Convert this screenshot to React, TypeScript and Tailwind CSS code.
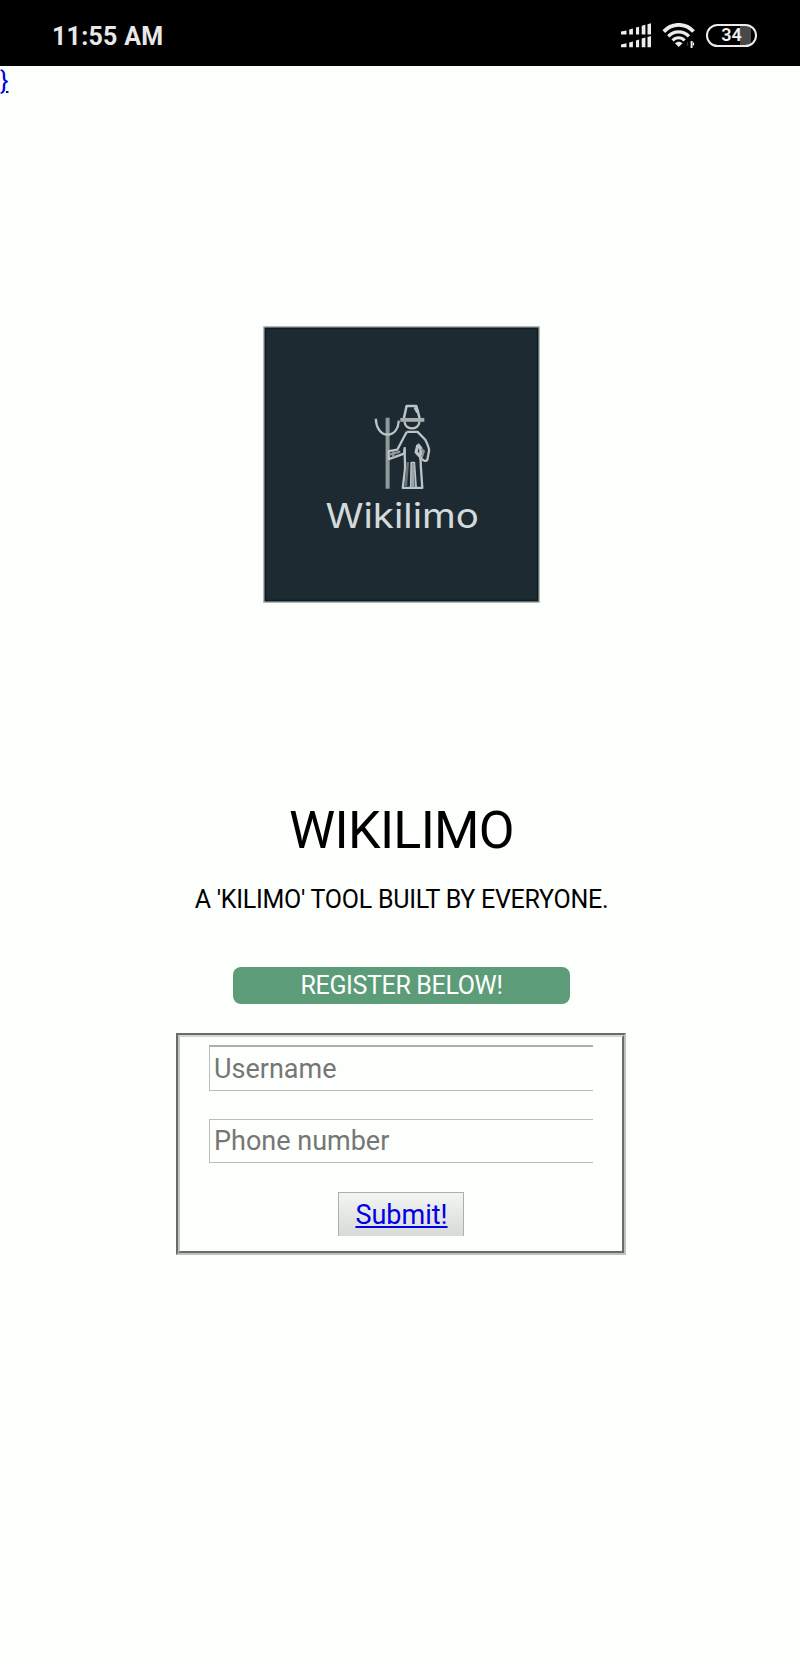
import React from "react";

function SignalIcon() {
  return (
    <svg width="32" height="26" viewBox="0 0 32 26" fill="#ececec">
      <path d="M1 8.600l5.500-1.200v4H1zM9.200 6.600l3.700-1v5.800H9.200zM16 4.600l3.100-.8v7.600H16zM21.700 2.800l3.700-1v9.600h-3.700zM27.500 1.200L31 .3v11.100h-3.500z" />
      <path d="M1 21.400l5.500-1.200v4H1zM9.200 19.400l3.700-1v5.800H9.200zM16 17.400l3.100-.8v7.600H16zM21.700 15.600l3.700-1v9.600h-3.700zM27.500 14l3.500-.9v11.100h-3.500z" />
    </svg>
  );
}

function WifiIcon() {
  return (
    <svg width="34" height="26" viewBox="0 0 34 26" fill="none" stroke="#ececec" strokeWidth="3.300">
      <path d="M1.800 8.600C10-.4 23.500-.4 31.500 8.600" strokeWidth="3.800" />
      <path d="M6.300 13.400C12 7.300 21.200 7.300 26.900 13.400" />
      <path d="M10.600 17.400c3.300-3.700 8.700-3.700 12 0" strokeWidth="3" />
      <path d="M13 20.300c2-2.200 5.600-2.200 7.500 0L16.700 24z" fill="#ececec" stroke="none" />
      <path d="M29.600 18v7" strokeWidth="2" />
      <path d="M31.500 19.500v3" strokeWidth="1.200" />
      <path d="M25.500 19v4" stroke="#333" strokeWidth="1.500" />
    </svg>
  );
}

function Logo() {
  return (
    <svg width="277" height="277" viewBox="263.500 325.500 277 277" className="block">
      <rect x="264.500" y="326.500" width="275" height="275" fill="#1d2a32" stroke="#9aa3a3" strokeWidth="1.500" />
      <rect x="266" y="328" width="272" height="272" fill="none" stroke="#0f1d25" strokeWidth="1.500" />
      <g transform="translate(0.8 -0.300)" fill="none" stroke="#bcc4c6" strokeWidth="2.300" strokeLinejoin="round">
        <path d="M387.300 417.500V488.500" stroke="#8f9a9c" strokeWidth="4" />
        <path d="M375.500 418.500C375.800 427 380 434.300 387.300 434.500C394.500 434.300 398 428 398.500 420.500" />
        <path d="M403.600 418L406.300 405.800H416L419.300 418" strokeWidth="2.500" />
        <path d="M414.800 407L417.500 412" strokeWidth="3.500" />
        <path d="M400 419.700H424" strokeWidth="3.800" stroke="#a7b0b1" />
        <path d="M404.200 421.500C405 430.500 418.300 430.500 419.200 421.500" />
        <path d="M406.500 431.700H417.300L425 439.500C427 443.500 428.800 447.500 428.800 450.500L427 459.500C425.500 461.500 423.500 460.800 421.700 458.700" />
        <path d="M406.500 431.700L403 438L397 449.500L388.500 451V459L403.800 453.500L404.500 447" />
        <path d="M404.300 449L404.800 468L402.500 487.700H422L420.500 466L420.200 456" />
        <path d="M389 454.500L400 451.500M393 451V457" stroke="#8f9a9c" />
        <path d="M417.300 444L420.500 448V459M417.500 445L415.800 452L419.500 456" strokeWidth="3.200" />
        <path d="M421 449L423.500 451L421.500 457" stroke="#89969a" />
        <path d="M410.500 487.500L411 462.500H414L415.800 487.500" strokeWidth="1.800" />
        <path d="M412.700 464V487" stroke="#98a3a6" strokeWidth="3" />
        <path d="M407.500 462L405.500 486" stroke="#66747a" strokeWidth="2.500" />
      </g>
      <text x="326" y="527" textLength="153.500" lengthAdjust="spacingAndGlyphs" fontSize="34" fill="#d3dadc" fontFamily="Inter, sans-serif">
        Wikilimo
      </text>
    </svg>
  );
}

export default function App() {
  return (
    <div className="flex h-[1664px] w-[800px] flex-col items-center overflow-hidden bg-[#fdfffd] font-['Roboto',sans-serif] text-black">
      <header className="flex h-[66px] w-full shrink-0 items-center bg-black pl-[52px] text-[#e8e8e8]">
        <span className="mt-[7px] w-[568px] text-[25px] font-bold leading-[30px] tracking-[0.25px]">11:55 AM</span>
        <div className="mt-[5px] flex items-center">
          <SignalIcon />
          <div className="ml-[10px]">
            <WifiIcon />
          </div>
          <div className="-mt-px ml-[10px] flex h-[23px] w-[51px] items-center justify-center rounded-full border-2 border-[#ececec] bg-[linear-gradient(to_right,#000_68%,#484848_68%,#484848_92%,#000_92%)] text-[18px] font-semibold leading-none text-[#f0f0f0]">
            34
          </div>
        </div>
      </header>
      <div className="h-[30px] w-full text-[25px] leading-[29px] text-[#0000e0]">
        <a className="underline">{"}"}</a>
      </div>
      <main className="flex flex-col items-center">
        <div className="mt-[230px] ml-[3px]">
          <Logo />
        </div>
        <h1 className="mt-[197px] ml-[3px] text-[52px] leading-[62px] tracking-[-0.7px]">WIKILIMO</h1>
        <p className="mt-[23px] ml-[3px] text-[25px] leading-[30px] tracking-[-0.26px] whitespace-nowrap">A 'KILIMO' TOOL BUILT BY EVERYONE.</p>
        <div className="mt-[52px] ml-[3px] flex h-[37px] w-[337px] items-center justify-center rounded-lg bg-[#5c9c78] text-[25px] leading-none tracking-[-0.35px] text-white">
          REGISTER BELOW!
        </div>
        <form className="mt-[29px] ml-[2px] h-[222px] w-[450px] border-2 border-t-[#696b69] border-r-[#bfc1bf] border-b-[#bfc1bf] border-l-[#696b69]">
          <div className="flex h-full flex-col items-center border-2 border-t-[#d4d6d4] border-r-[#696b69] border-b-[#696b69] border-l-[#c4c6c4] pt-2">
            <input placeholder="Username" className="h-[46px] w-[384px] border border-t-2 border-r-0 border-[#bbbdbb] border-t-[#adafad] px-1 text-[27px] placeholder:text-[#757775]" />
            <input placeholder="Phone number" className="mt-[28px] h-[44px] w-[384px] border border-r-0 border-[#bbbdbb] px-1 text-[27px] placeholder:text-[#757775]" />
            <button type="button" className="mt-[29px] h-[44px] w-[126px] border border-b-0 border-[#adafad] bg-linear-to-b from-[#f3f5f3] to-[#d8dad8] pt-px pl-px text-[27px] leading-none text-[#0000e8] underline decoration-2 underline-offset-2">
              Submit!
            </button>
          </div>
        </form>
      </main>
    </div>
  );
}
